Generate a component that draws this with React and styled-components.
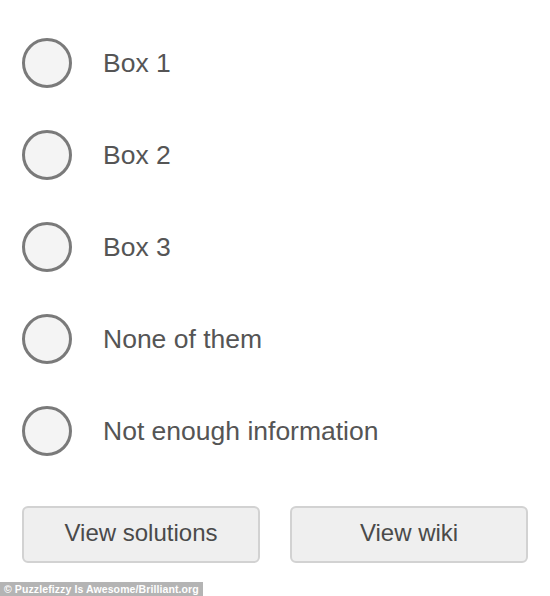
import React, { useState } from "react";
import styled, { createGlobalStyle } from "styled-components";

const GlobalStyle = createGlobalStyle`
    html, body {
        margin: 0;
        padding: 0;
        background: #ffffff;
        font-family: "Liberation Sans", Arial, sans-serif;
    }
`;

const options = ["Box 1", "Box 2", "Box 3", "None of them", "Not enough information"];

export default function App() {
    const [selected, setSelected] = useState(null);

    return (
        <Page>
            <GlobalStyle />
            <OptionList>
                {options.map((label, i) => (
                    <Option key={label} onClick={() => setSelected(i)}>
                        <Radio $checked={selected === i} />
                        <Label>{label}</Label>
                    </Option>
                ))}
            </OptionList>
            <Actions>
                <Button>View solutions</Button>
                <Button>View wiki</Button>
            </Actions>
            <Credit>© Puzzlefizzy Is Awesome/Brilliant.org</Credit>
        </Page>
    );
}

const Page = styled.div`
    width: 550px;
    height: 596px;
    display: flex;
    flex-direction: column;
    padding-top: 17px;
    box-sizing: border-box;
`;

const OptionList = styled.div`
    display: flex;
    flex-direction: column;
    padding: 0 22px;
`;

const Option = styled.div`
    height: 92px;
    display: flex;
    align-items: center;
    gap: 31px;
    cursor: pointer;
`;

const Radio = styled.span`
    width: 50px;
    height: 50px;
    box-sizing: border-box;
    border-radius: 50%;
    border: 3px solid #7a7a7a;
    background: ${(p) => (p.$checked ? "#dcdcdc" : "#f4f4f4")};
    flex-shrink: 0;
`;

const Label = styled.span`
    font-size: 26.5px;
    color: #555555;
    line-height: 1;
`;

const Actions = styled.div`
    display: grid;
    grid-template-columns: 238px 238px;
    gap: 30px;
    padding: 0 22px;
    margin-top: 29px;
`;

const Button = styled.button`
    height: 57px;
    padding: 0 0 4px;
    border: 2px solid #d2d2d2;
    border-radius: 6px;
    background: #efefef;
    color: #4a4a4a;
    font-family: "Liberation Sans", Arial, sans-serif;
    font-size: 24px;
    cursor: pointer;
`;

const Credit = styled.div`
    margin-top: auto;
    align-self: flex-start;
    height: 14px;
    padding: 0 4px;
    background: #b4b4b4;
    color: #ffffff;
    font-size: 10.5px;
    font-weight: bold;
    letter-spacing: 0.1px;
    line-height: 14px;
    white-space: nowrap;
`;
